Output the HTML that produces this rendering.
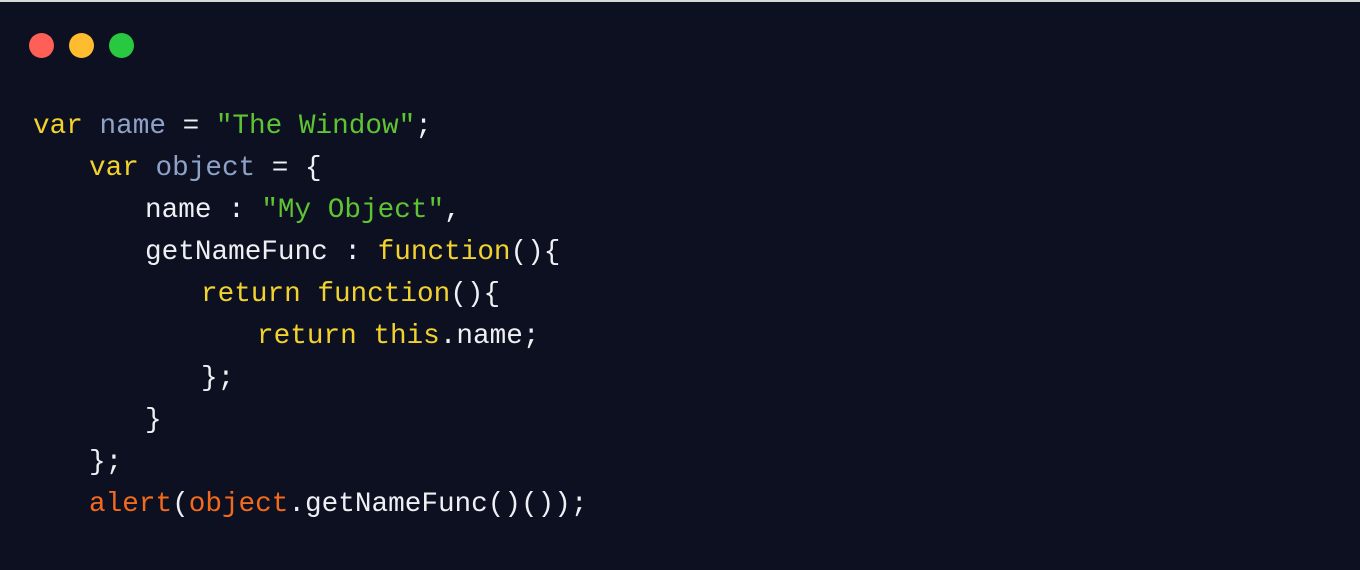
<!DOCTYPE html>
<html><head><meta charset="utf-8"><style>
html,body{margin:0;padding:0;width:1360px;height:570px;overflow:hidden;background:#0c1020;}
.top{position:absolute;left:0;top:0;width:1360px;height:2px;background:#d8d8d8;}
.win{position:absolute;left:0;top:2px;width:1360px;height:568px;background:#0c1020;border-radius:8px;}
.dot{position:absolute;top:31px;width:25px;height:25px;border-radius:50%;}
.code{position:absolute;left:33px;top:106px;margin:0;font-family:"Liberation Mono","DejaVu Sans Mono",monospace;font-size:27.7px;line-height:42px;color:#eef0f4;}
.code div{white-space:pre;height:42px;}
.i1{padding-left:56px}.i2{padding-left:112px}.i3{padding-left:168px}.i4{padding-left:224px}
.k{color:#f2d22e}.v{color:#8ea2c8}.s{color:#5fc434}.o{color:#f36a1c}
</style></head><body>
<div class="top"></div>
<div class="win">
<div class="dot" style="left:29px;background:#fe5f57"></div>
<div class="dot" style="left:69px;background:#febc2e"></div>
<div class="dot" style="left:109px;background:#28c840"></div>
</div>
<div class="code"><div><span class="k">var</span> <span class="v">name</span> = <span class="s">"The Window"</span>;</div><div class="i1"><span class="k">var</span> <span class="v">object</span> = {</div><div class="i2">name : <span class="s">"My Object"</span>,</div><div class="i2">getNameFunc : <span class="k">function</span>(){</div><div class="i3"><span class="k">return</span> <span class="k">function</span>(){</div><div class="i4"><span class="k">return</span> <span class="k">this</span>.name;</div><div class="i3">};</div><div class="i2">}</div><div class="i1">};</div><div class="i1"><span class="o">alert</span>(<span class="o">object</span>.getNameFunc()());</div></div>
</body></html>
